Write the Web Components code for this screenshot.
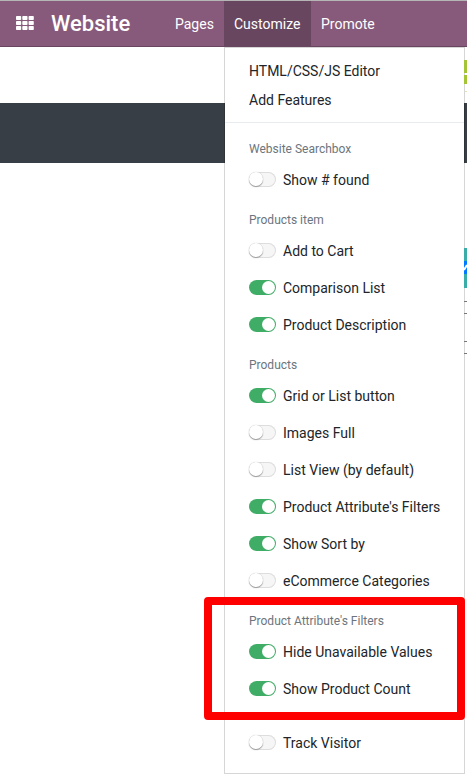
<!DOCTYPE html>
<html lang="en">
<head>
<meta charset="utf-8">
<title>Website</title>
<style>
html,body{margin:0;padding:0;overflow:hidden;background:#fff}
body{font-family:Roboto,"Liberation Sans",sans-serif;color:#212529}
</style>
</head>
<body>
<website-page>
  <top-nav slot="nav">
    <nav-entry style="width:59px">Pages</nav-entry>
    <nav-entry active style="width:87px">Customize</nav-entry>
    <nav-entry>Promote</nav-entry>
  </top-nav>
  <customize-menu slot="menu">
    <menu-link>HTML/CSS/JS Editor</menu-link>
    <menu-link>Add Features</menu-link>
    <menu-divider></menu-divider>
    <menu-heading>Website Searchbox</menu-heading>
    <toggle-row>Show # found</toggle-row>
    <menu-heading>Products item</menu-heading>
    <toggle-row>Add to Cart</toggle-row>
    <toggle-row on>Comparison List</toggle-row>
    <toggle-row on>Product Description</toggle-row>
    <menu-heading>Products</menu-heading>
    <toggle-row on>Grid or List button</toggle-row>
    <toggle-row>Images Full</toggle-row>
    <toggle-row>List View (by default)</toggle-row>
    <toggle-row on>Product Attribute's Filters</toggle-row>
    <toggle-row on>Show Sort by</toggle-row>
    <toggle-row>eCommerce Categories</toggle-row>
    <menu-heading>Product Attribute's Filters</menu-heading>
    <toggle-row on>Hide Unavailable Values</toggle-row>
    <toggle-row on>Show Product Count</toggle-row>
    <menu-divider end></menu-divider>
    <toggle-row>Track Visitor</toggle-row>
  </customize-menu>
  <highlight-frame slot="menu"></highlight-frame>
</website-page>
<script>
function define(name, html) {
  customElements.define(name, class extends HTMLElement {
    constructor() {
      super();
      this.attachShadow({mode: 'open'}).innerHTML = html;
    }
  });
}
define('website-page', `<style>
:host{display:block;position:relative;width:467px;height:776px;overflow:hidden;background:#fff}
.band{margin-top:56px;height:60px;background:#383e45}
.edge{position:absolute;left:464px;top:0}
</style>
<slot name="nav"></slot><div class="band"></div>
<slot name="menu"></slot>
<svg class="edge" width="3" height="400" shape-rendering="crispEdges">
<path fill="#a3c435" d="M0 60h3v13H0zM0 75h3v9H0z"/><path fill="#dce8b5" d="M1 91h2v1H1z"/>
<path fill="#3aada8" d="M0 248h3v40H0z"/><path fill="#007bff" d="M0 261h3v13H0z"/>
<path d="M0 270L3 265" stroke="#fff" stroke-width="2" shape-rendering="auto"/>
<path fill="#777" d="M0 301h3v1H0zM0 313h3v1H0zM0 341h3v1H0zM0 353h3v1H0z"/>
</svg>`);
define('top-nav', `<style>
:host{display:flex;box-sizing:border-box;height:47px;border-top:1px solid #b5b5b5;background:#875a7b;box-shadow:inset 0 -1px #68465f;color:#fff}
svg{margin:15px 0 0 16px;flex:none}
.brand{width:114px;margin-left:17px;font-size:22px;font-weight:500;line-height:45px;white-space:nowrap}
</style>
<svg width="18" height="14" fill="#fff"><g id="r"><rect width="5.2" height="4" rx=".8"/><rect x="6.3" width="5.2" height="4" rx=".8"/><rect x="12.6" width="5.2" height="4" rx=".8"/></g><use href="#r" y="5"/><use href="#r" y="10"/></svg>
<div class="brand">Website</div><slot></slot>`);
define('nav-entry', `<style>
:host{display:block;box-sizing:border-box;padding:0 10px;font-size:14px;line-height:46px;white-space:nowrap}
:host([active]){background:#68465f}
</style><slot></slot>`);
define('customize-menu', `<style>
:host{display:block;position:absolute;left:224px;top:47px;box-sizing:border-box;width:241px;height:727px;padding-top:8px;border:1px solid rgba(0,0,0,.16);background:#fff;background-clip:padding-box}
</style><slot></slot>`);
define('menu-link', `<style>
:host{display:block;height:29px;line-height:30px;padding-left:24px;font-size:14px}
</style><slot></slot>`);
define('menu-divider', `<style>
:host{display:block;height:1px;margin:8px 0 4px;background:#e9ecef}
:host([end]){margin:8px 0}
</style>`);
define('menu-heading', `<style>
:host{display:block;box-sizing:border-box;height:34px;padding:14px 0 0 24px;font-size:12px;line-height:16px;color:#6c757d;white-space:nowrap}
</style><slot></slot>`);
define('toggle-row', `<style>
:host{display:flex;align-items:center;height:37px;padding-left:24px;font-size:14px;white-space:nowrap}
.switch{box-sizing:border-box;width:27px;height:15px;margin-right:7px;border-radius:8px;background:#f6f6f6;box-shadow:inset 0 0 0 1px #ddd;flex:none}
.knob{width:14px;height:14px;border-radius:50%;background:#fff;box-shadow:0 1px 1px #999,0 0 1px #bbb}
:host([on]) .switch{background:#40ad67;box-shadow:none;padding:1px 0 0 13px}
:host([on]) .knob{width:13px;height:13px;box-shadow:none}
.label{line-height:20px}
</style><span class="switch"><div class="knob"></div></span><span class="label"><slot></slot></span>`);
define('highlight-frame', `<style>
:host{display:block;position:absolute;left:204px;top:597px;box-sizing:border-box;width:261px;height:123px;border:8px solid #f00;border-radius:4px}
</style>`);
</script>
</body>
</html>
